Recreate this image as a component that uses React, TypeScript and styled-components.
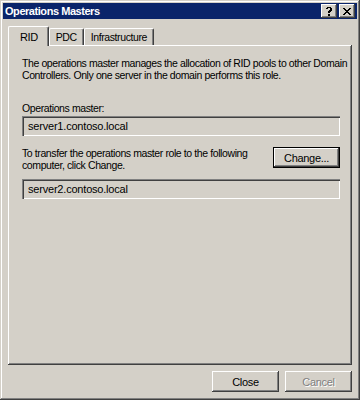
import styled, { createGlobalStyle, css } from "styled-components";

const GlobalStyle = createGlobalStyle`
  html, body {
    margin: 0;
    padding: 0;
    background: #d4d0c8;
  }
  * {
    box-sizing: border-box;
  }
`;

const raised = css`
  box-shadow: inset -1px -1px #404040, inset 1px 1px #d4d0c8,
    inset -2px -2px #808080, inset 2px 2px #ffffff;
`;

const Window = styled.div`
  width: 360px;
  height: 400px;
  background: #d4d0c8;
  padding: 3px;
  display: flex;
  flex-direction: column;
  font-family: "Liberation Sans", Arial, sans-serif;
  font-size: 10.5px;
  letter-spacing: -0.4px;
  color: #000;
  ${raised}
`;

const TitleBar = styled.div`
  height: 16px;
  background: #0a246a;
  display: flex;
  align-items: center;
  padding: 0 2px 0 2px;
`;

const Title = styled.div`
  flex: 1;
  color: #fff;
  font-weight: bold;
  font-size: 11px;
  letter-spacing: -0.45px;
`;

const CaptionButton = styled.div`
  width: 16px;
  height: 14px;
  background: #d4d0c8;
  display: flex;
  align-items: center;
  justify-content: center;
  margin-left: ${(p: { $gap?: number }) => p.$gap ?? 0}px;
  box-shadow: inset -1px -1px #404040, inset 1px 1px #ffffff,
    inset -2px -2px #808080;
`;

const Body = styled.div`
  flex: 1;
  display: flex;
  flex-direction: column;
  padding: 6px 4px 0 5px;
`;

const TabRow = styled.div`
  display: flex;
  align-items: flex-end;
  height: 20px;
`;

const Tab = styled.div<{ $active?: boolean }>`
  height: ${(p) => (p.$active ? 20 : 17)}px;
  padding: ${(p) => (p.$active ? "0 10px 0 11px" : "0 6px 0 6px")};
  display: flex;
  align-items: center;
  justify-content: center;
  background: #d4d0c8;
  font-size: ${(p) => (p.$active ? 11 : 10.5)}px;
  margin-bottom: ${(p) => (p.$active ? -1 : 0)}px;
  z-index: ${(p) => (p.$active ? 2 : 1)};
  border-top: 1px solid #ffffff;
  border-left: 1px solid #ffffff;
  border-right: 1px solid #404040;
  box-shadow: inset -1px 0 #808080;
  border-top-left-radius: 2px;
  border-top-right-radius: 2px;
`;

const Panel = styled.div`
  height: 320px;
  width: 344px;
  display: flex;
  flex-direction: column;
  padding: 12px 12px 0 14px;
  box-shadow: inset -1px -1px #404040, inset 1px 1px #ffffff,
    inset -2px -2px #808080;
`;

const Para = styled.p`
  margin: 0;
  line-height: 12px;
  white-space: nowrap;
`;

const Label = styled.div`
  line-height: 12px;
  margin-top: 21px;
`;

const Field = styled.div`
  height: 20px;
  width: 318px;
  display: flex;
  align-items: center;
  padding-left: 6px;
  font-size: 11px;
  letter-spacing: -0.2px;
  margin-top: ${(p: { $top: number }) => p.$top}px;
  box-shadow: inset 1px 1px #808080, inset 2px 2px #404040,
    inset -1px -1px #ffffff, inset -2px -2px #d4d0c8;
`;

const TransferRow = styled.div`
  display: flex;
  align-items: flex-start;
  justify-content: space-between;
  width: 318px;
  margin-top: 11px;
`;

const Button = styled.button<{ $focused?: boolean; $disabled?: boolean }>`
  width: 67px;
  height: 21px;
  background: #d4d0c8;
  border: none;
  padding: 0;
  font-family: "Liberation Sans", Arial, sans-serif;
  font-size: 11px;
  letter-spacing: -0.3px;
  color: ${(p) => (p.$disabled ? "#808080" : "#000")};
  text-shadow: ${(p) => (p.$disabled ? "1px 1px #ffffff" : "none")};
  ${(p) =>
    p.$focused
      ? css`
          box-shadow: inset 0 0 0 1px #000, inset -2px -2px #404040,
            inset 2px 2px #ffffff, inset -3px -3px #808080;
        `
      : css`
          box-shadow: inset -1px -1px #404040, inset 1px 1px #ffffff,
            inset -2px -2px #808080;
        `}
`;

const Footer = styled.div`
  display: flex;
  justify-content: flex-end;
  gap: 6px;
  padding: 6px 1px 0 0;
`;

export default function App() {
  return (
    <>
      <GlobalStyle />
      <Window>
        <TitleBar>
          <Title>Operations Masters</Title>
          <CaptionButton>
            <svg width="8" height="9" viewBox="0 0 8 9">
              <path
                d="M1 1h1V0h4v1h1v3H6v1H5v1H3V4h1V3h1V1H3v1H1z M3 7h2v2H3z"
                fill="#000"
              />
            </svg>
          </CaptionButton>
          <CaptionButton $gap={2}>
            <svg width="8" height="7" viewBox="0 0 8 7">
              <path
                d="M0 0h2v1h1v1h2V1h1V0h2v1H7v1H6v1H5v1h1v1h1v1h1v1H6V6H5V5H3v1H2v1H0V6h1V5h1V4h1V3H2V2H1V1H0z"
                fill="#000"
              />
            </svg>
          </CaptionButton>
        </TitleBar>
        <Body>
          <TabRow>
            <Tab $active>RID</Tab>
            <Tab>PDC</Tab>
            <Tab>Infrastructure</Tab>
          </TabRow>
          <Panel>
            <Para>
              The operations master manages the allocation of RID pools to other
              Domain
              <br />
              Controllers. Only one server in the domain performs this role.
            </Para>
            <Label>Operations master:</Label>
            <Field $top={2}>server1.contoso.local</Field>
            <TransferRow>
              <Para>
                To transfer the operations master role to the following
                <br />
                computer, click Change.
              </Para>
              <Button $focused>Change...</Button>
            </TransferRow>
            <Field $top={8}>server2.contoso.local</Field>
          </Panel>
          <Footer>
            <Button>Close</Button>
            <Button $disabled>Cancel</Button>
          </Footer>
        </Body>
      </Window>
    </>
  );
}
